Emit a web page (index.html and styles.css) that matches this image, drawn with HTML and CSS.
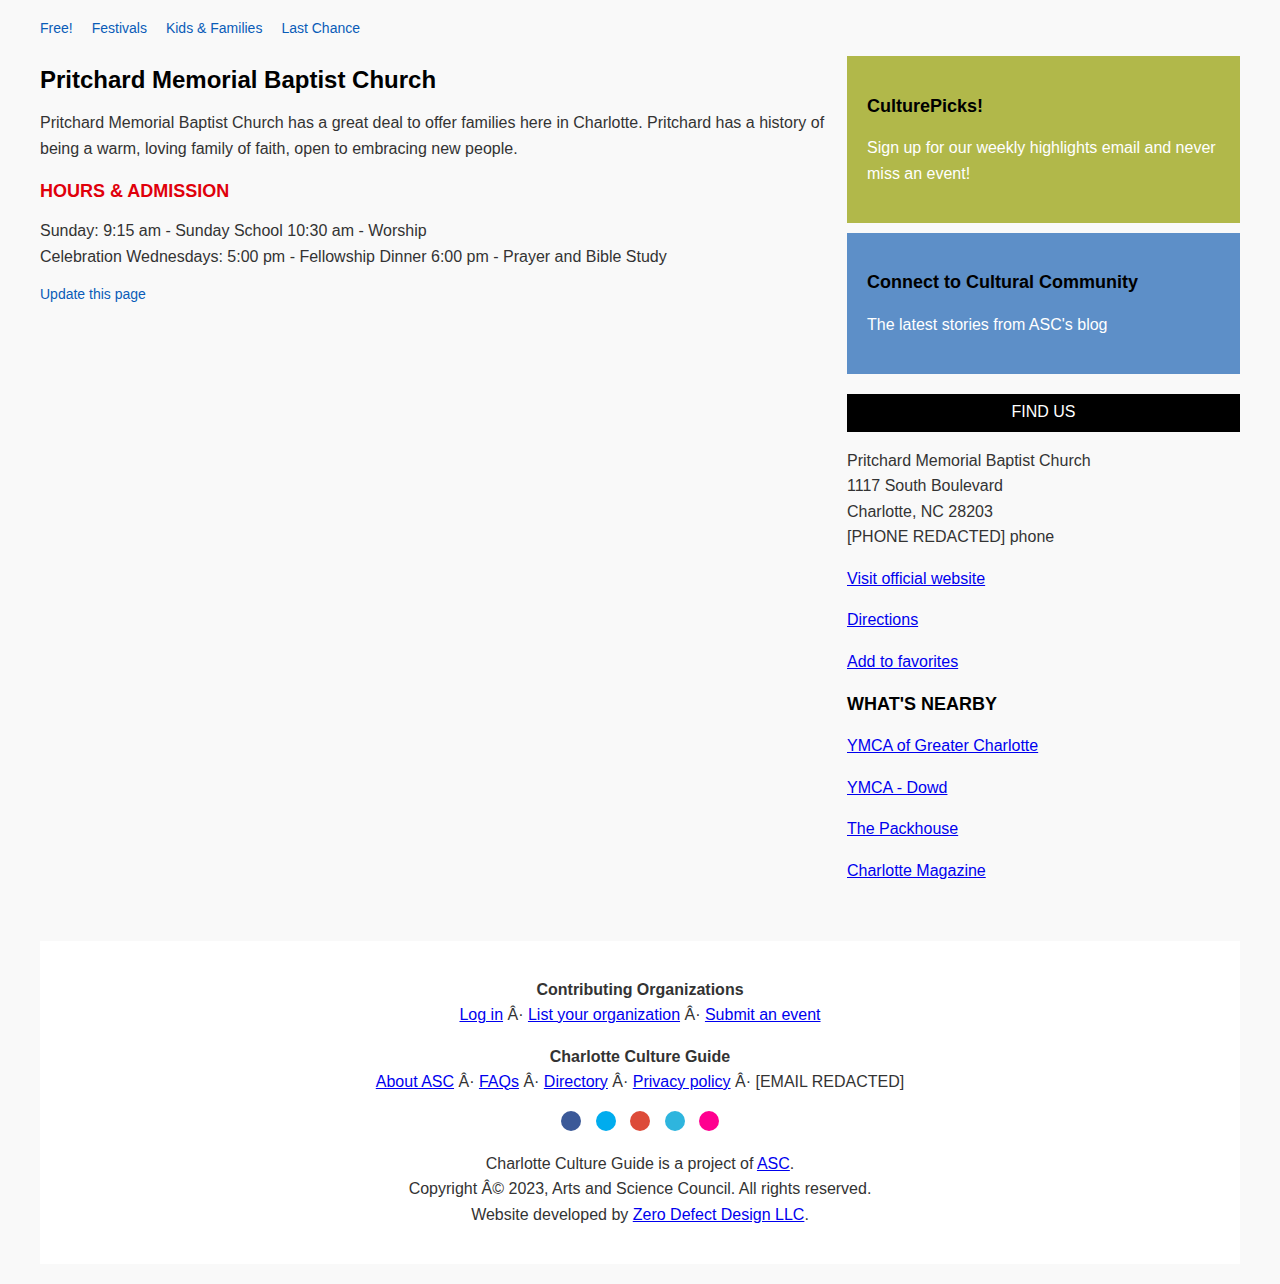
FILE: index.html
```html
<!DOCTYPE html>
<html>
<head>
<meta charset="utf-8">
<link rel="stylesheet" href="styles.css">
</head>
<body>
<div class="page">
  <nav class="topnav">
    <a href="#">Free!</a>
    <a href="#">Festivals</a>
    <a href="#">Kids &amp; Families</a>
    <a href="#">Last Chance</a>
  </nav>
  <div class="layout">
    <main class="main">
      <h1 class="title">Pritchard Memorial Baptist Church</h1>
      <p class="intro">Pritchard Memorial Baptist Church has a great deal to offer families here in Charlotte. Pritchard has a history of being a warm, loving family of faith, open to embracing new people.</p>
      <h2 class="section-head">HOURS &amp; ADMISSION</h2>
      <p class="hours">Sunday: 9:15 am - Sunday School 10:30 am - Worship<br>Celebration Wednesdays: 5:00 pm - Fellowship Dinner 6:00 pm - Prayer and Bible Study</p>
      <a class="update" href="#">Update this page</a>
    </main>
    <aside class="sidebar">
      <div class="promo promo-green">
        <h3 class="promo-title">CulturePicks!</h3>
        <p class="promo-text">Sign up for our weekly highlights email and never miss an event!</p>
      </div>
      <div class="promo promo-blue">
        <h3 class="promo-title">Connect to Cultural Community</h3>
        <p class="promo-text">The latest stories from ASC's blog</p>
      </div>
      <div class="findus">FIND US</div>
      <p class="address">Pritchard Memorial Baptist Church<br>1117 South Boulevard<br>Charlotte, NC 28203<br>[PHONE REDACTED] phone</p>
      <ul class="links">
        <li><a href="#">Visit official website</a></li>
        <li><a href="#">Directions</a></li>
        <li><a href="#">Add to favorites</a></li>
      </ul>
      <h3 class="nearby-head">WHAT'S NEARBY</h3>
      <ul class="links">
        <li><a href="#">YMCA of Greater Charlotte</a></li>
        <li><a href="#">YMCA - Dowd</a></li>
        <li><a href="#">The Packhouse</a></li>
        <li><a href="#">Charlotte Magazine</a></li>
      </ul>
    </aside>
  </div>
  <footer class="footer">
    <div class="foot-block">
      <div class="foot-head">Contributing Organizations</div>
      <div><a href="#">Log in</a> Â· <a href="#">List your organization</a> Â· <a href="#">Submit an event</a></div>
    </div>
    <div class="foot-block">
      <div class="foot-head">Charlotte Culture Guide</div>
      <div><a href="#">About ASC</a> Â· <a href="#">FAQs</a> Â· <a href="#">Directory</a> Â· <a href="#">Privacy policy</a> Â· [EMAIL REDACTED]</div>
    </div>
    <div class="social">
      <span class="dot fb"></span>
      <span class="dot tw"></span>
      <span class="dot gp"></span>
      <span class="dot vm"></span>
      <span class="dot fl"></span>
    </div>
    <div class="credits">
      Charlotte Culture Guide is a project of <a href="#">ASC</a>.<br>
      Copyright Â© 2023, Arts and Science Council. All rights reserved.<br>
      Website developed by <a href="#">Zero Defect Design LLC</a>.
    </div>
  </footer>
</div>
</body>
</html>
```

FILE: styles.css
```css
html, body {
  margin: 0;
  padding: 0;
}
body {
  background: #f9f9f9;
  font-family: "Liberation Sans", Arial, sans-serif;
  font-size: 16px;
  color: #333;
}
.page {
  width: 1200px;
  margin: 0 auto;
  padding: 19px 0 20px;
}
.topnav {
  display: flex;
  gap: 19px;
  font-size: 14px;
  line-height: 18px;
}
.topnav a, .update {
  color: #0a5cb8;
  text-decoration: none;
}
.layout {
  display: flex;
  gap: 22px;
  margin-top: 19px;
}
.main {
  flex: 1;
}
.title {
  margin: 8px 0 0;
  font-size: 24px;
  line-height: 32px;
  color: #000;
}
.intro {
  margin: 14px 0 0;
  line-height: 26px;
}
.section-head {
  margin: 17px 0 0;
  font-size: 18px;
  line-height: 24px;
  color: #e0000b;
}
.hours {
  margin: 15px 0 0;
  line-height: 26px;
}
.update {
  display: block;
  margin-top: 15px;
  font-size: 14px;
  line-height: 18px;
}
.sidebar {
  width: 393px;
  flex: none;
}
.promo {
  padding: 38px 20px 36px;
}
.promo-green {
  background: #b1b84a;
}
.promo-blue {
  background: #5d8fc8;
  margin-top: 10px;
  padding-top: 37px;
  padding-bottom: 36px;
}
.promo-title {
  margin: 0;
  font-size: 18px;
  line-height: 24px;
  color: #000;
}
.promo-text {
  margin: 17px 0 0;
  color: #fff;
  line-height: 26px;
}
.promo-blue .promo-text {
  margin-top: 18px;
}
.findus {
  margin-top: 20px;
  background: #000;
  color: #fff;
  text-align: center;
  height: 38px;
  line-height: 36px;
}
.address {
  margin: 16px 0 0;
  line-height: 25.3px;
}
.links {
  list-style: none;
  margin: 0;
  padding: 0;
}
.links li {
  margin-top: 16.5px;
  line-height: 25px;
}
.links a, .footer a {
  color: #0000ee;
  text-decoration: underline;
}
.nearby-head {
  margin: 17px 0 0;
  font-size: 18px;
  line-height: 26px;
  color: #000;
}
.footer {
  margin-top: 58px;
  background: #fff;
  text-align: center;
  padding: 36px 0 37px;
  line-height: 25px;
}
.foot-block + .foot-block {
  margin-top: 17px;
}
.foot-head {
  font-weight: bold;
}
.social {
  display: flex;
  justify-content: center;
  gap: 14.5px;
  margin-top: 17px;
  height: 20px;
}
.dot {
  width: 20px;
  height: 20px;
  border-radius: 50%;
  display: block;
}
.fb { background: #3b5998; }
.tw { background: #00acee; }
.gp { background: #dd4b39; }
.vm { background: #2eb5de; }
.fl { background: #ff0090; }
.credits {
  margin-top: 20px;
  line-height: 25.5px;
}
```
